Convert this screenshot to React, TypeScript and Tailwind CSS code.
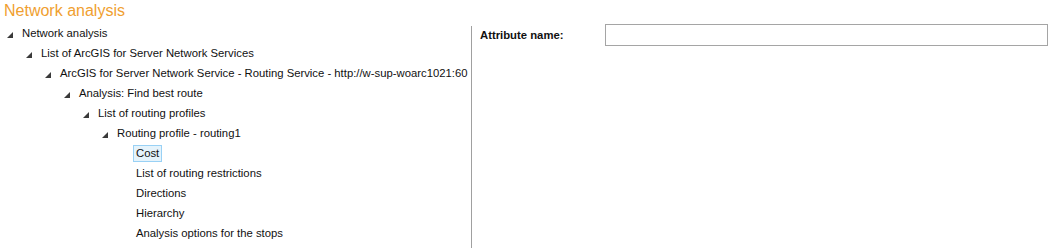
import React from "react";

type Node = { label: string; level: number; leaf?: boolean; selected?: boolean };

const nodes: Node[] = [
  { label: "Network analysis", level: 0 },
  { label: "List of ArcGIS for Server Network Services", level: 1 },
  { label: "ArcGIS for Server Network Service - Routing Service - http://w-sup-woarc1021:60", level: 2 },
  { label: "Analysis: Find best route", level: 3 },
  { label: "List of routing profiles", level: 4 },
  { label: "Routing profile - routing1", level: 5 },
  { label: "Cost", level: 6, leaf: true, selected: true },
  { label: "List of routing restrictions", level: 6, leaf: true },
  { label: "Directions", level: 6, leaf: true },
  { label: "Hierarchy", level: 6, leaf: true },
  { label: "Analysis options for the stops", level: 6, leaf: true },
];

function Triangle() {
  return (
    <svg width="6" height="6" viewBox="0 0 6 6" className="shrink-0 mt-[3px]">
      <polygon points="6,0 6,6 0,6" fill="#3a3a3a" />
    </svg>
  );
}

export default function App() {
  return (
    <div
      className="w-[1052px] h-[248px] bg-white overflow-hidden flex flex-col text-[#111]"
      style={{ fontFamily: '"Liberation Sans", Arial, sans-serif' }}
    >
      <div className="h-[22px] pl-[4px] text-[16px] leading-[22px] text-[#f0a030] whitespace-nowrap">
        Network analysis
      </div>
      <div className="flex flex-1 min-h-0">
        <div className="w-[471px] shrink-0 pt-[1px] overflow-hidden">
          {nodes.map((n, i) => (
            <div
              key={i}
              className="h-[20px] flex items-center whitespace-nowrap text-[11.3px]"
              style={{ paddingLeft: n.leaf ? n.level * 19 + 19 : n.level * 19 + 7 }}
            >
              {n.leaf ? (
                <span
                  className={
                    n.selected
                      ? "h-[17px] leading-[15px] px-[2px] border border-[#99d1f5] bg-[#e5f3fb]"
                      : "h-[17px] leading-[15px] px-[2px] border border-transparent"
                  }
                >
                  {n.label}
                </span>
              ) : (
                <>
                  <Triangle />
                  <span className="ml-[9px]">{n.label}</span>
                </>
              )}
            </div>
          ))}
        </div>
        <div className="flex flex-1 min-w-0">
          <div className="w-px bg-[#a0a0a0] mt-[4px] shrink-0" />
          <div className="flex-1 flex items-start pl-[8px] pt-[2px]">
            <div className="w-[125px] h-[22px] leading-[22px] text-[11.3px] font-bold whitespace-nowrap">
              Attribute name:
            </div>
            <div className="flex-1 h-[22px] border border-[#a5a5a5] bg-white mr-[4px]" />
          </div>
        </div>
      </div>
    </div>
  );
}
